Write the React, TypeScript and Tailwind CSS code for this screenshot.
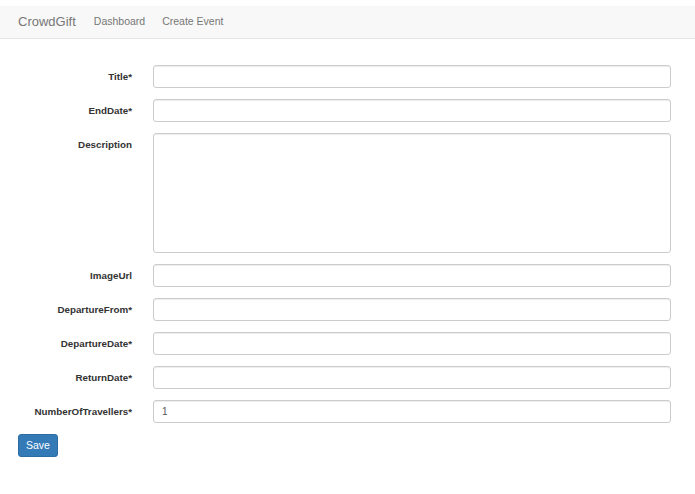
export default function App() {
  const rows: [string, string?, boolean?][] = [
    ["Title*"], ["EndDate*"], ["Description", "", true], ["ImageUrl"], ["DepartureFrom*"],
    ["DepartureDate*"], ["ReturnDate*"], ["NumberOfTravellers*", "1"],
  ];
  return (
    <div className="min-h-[494px] bg-white text-[#333]" style={{ fontFamily: '"Liberation Sans", Arial, sans-serif' }}>
      <div className="h-[6px]" />
      <div className="h-[33px] bg-[#f8f8f8] border-b border-[#e7e7e7] flex items-center px-[18px]">
        <span className="text-[13px] text-[#777] mr-[18px]">CrowdGift</span>
        <span className="text-[10.5px] text-[#777] mr-[17px]">Dashboard</span>
        <span className="text-[10.5px] text-[#777]">Create Event</span>
      </div>
      <div className="pt-[26px] pl-[18px] pr-[24px] flex flex-col gap-[11px]">
        {rows.map(([l, v, big]) => (
          <div key={l} className="flex">
            <div className="w-[114px] text-right text-[9.8px] font-bold pt-[5px]">{l}</div>
            <div className={`ml-[21px] flex-1 border border-[#ccc] rounded-[3px] shadow-[inset_0_1px_1px_rgba(0,0,0,0.075)] text-[10px] text-[#555] px-[8px] flex items-center ${big ? "h-[120px]" : "h-[23px]"}`}>{v}</div>
          </div>
        ))}
        <div className="-mt-[2px]">
          <button className="w-[40px] h-[23px] bg-[#337ab7] border border-[#2e6da4] rounded-[3px] text-white text-[10.5px]">Save</button>
        </div>
      </div>
    </div>
  );
}
